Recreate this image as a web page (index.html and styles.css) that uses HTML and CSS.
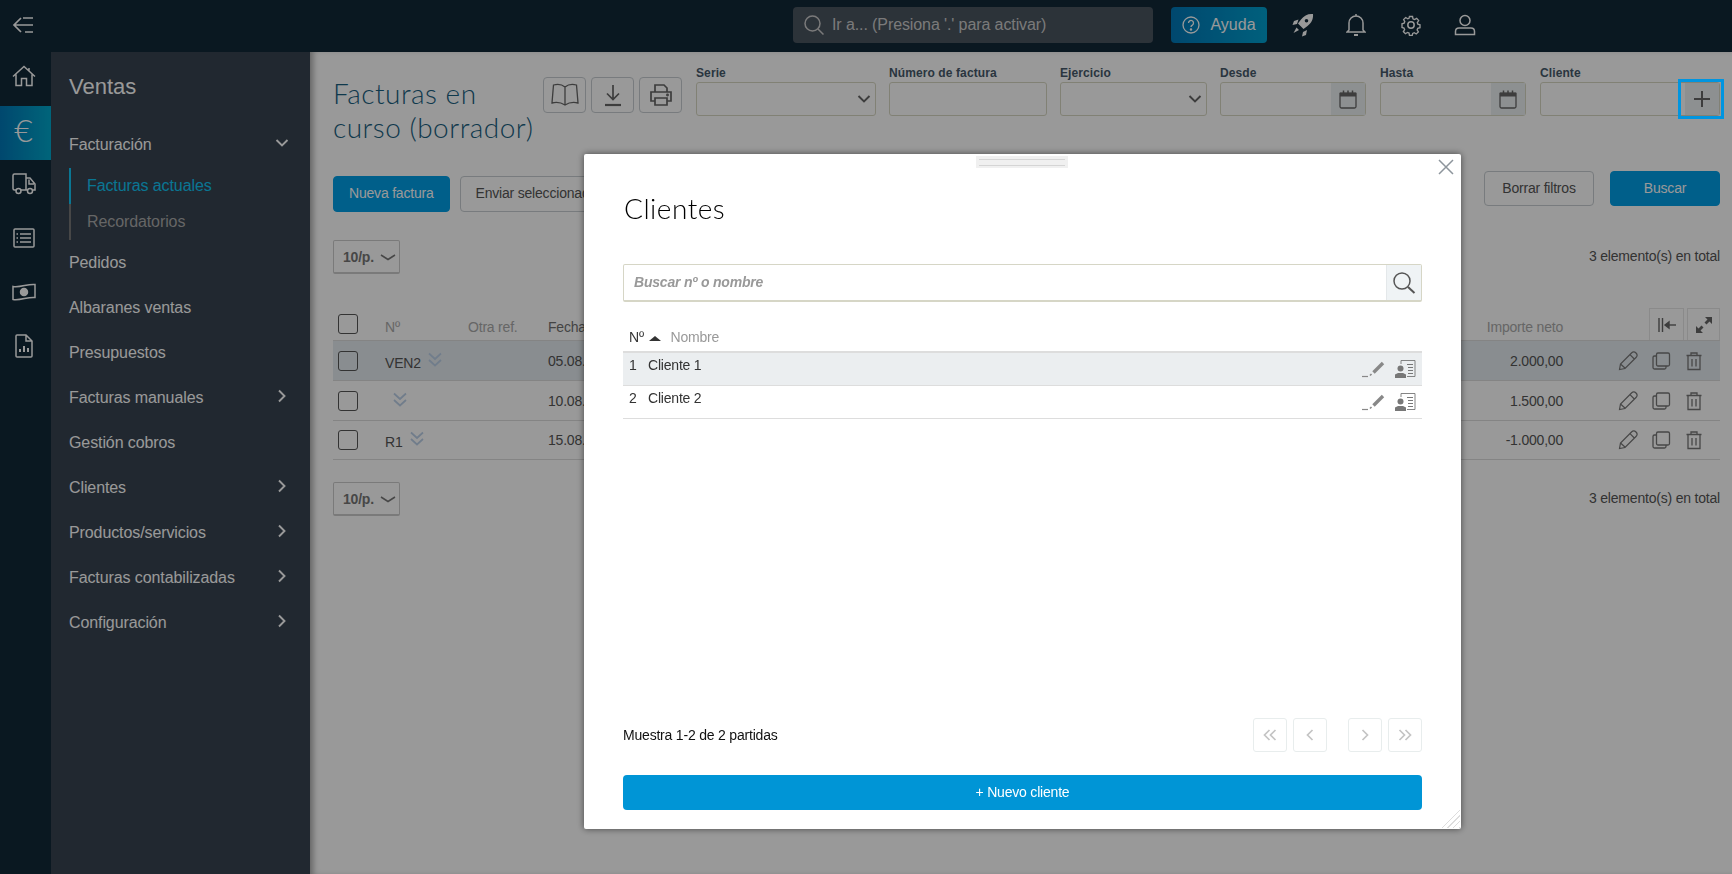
FILE: index.html
```html
<!DOCTYPE html>
<html lang="es">
<head>
    <meta charset="UTF-8">
    <meta name="viewport" content="width=device-width, initial-scale=1.0">
    <title>Facturas en curso (borrador)</title>
    <link rel="stylesheet" href="styles.css">
</head>
<body>
    <svg class="icon-defs" aria-hidden="true">
        <symbol id="i-chevron" viewBox="0 0 16 16"><path d="M2.500 5l5.500 5.500L13.500 5" fill="none" stroke="currentColor" stroke-width="1.900"/></symbol>
        <symbol id="i-chevron-r" viewBox="0 0 16 16"><path d="M5 2.500L10.500 8 5 13.500" fill="none" stroke="currentColor" stroke-width="1.900"/></symbol>
        <symbol id="i-chevron-wide" viewBox="0 0 16 16"><path d="M1 6l7 4.500L15 6" fill="none" stroke="currentColor" stroke-width="1.500"/></symbol>
        <symbol id="i-cal" viewBox="0 0 20 20"><path d="M2 4.500h16v13a1.500 1.500 0 0 1-1.500 1.500h-13A1.500 1.500 0 0 1 2 17.500z" fill="none" stroke="currentColor" stroke-width="1.300"/><path d="M2 3.500h16v4H2z" fill="currentColor"/><path d="M5.500 1.500v3M10 1.500v3M14.500 1.500v3" stroke="currentColor" stroke-width="1.500"/></symbol>
        <symbol id="i-double" viewBox="0 0 16 16"><path d="M2 1.500l6 5.500 6-5.500M2 8l6 5.500L14 8" fill="none" stroke="currentColor" stroke-width="1.700"/></symbol>
        <symbol id="i-pencil" viewBox="0 0 20 20"><path d="M1.500 18.500l1-5.500L13.500 2a2.500 2.500 0 0 1 4.500 4.500L7 17.500zM2.500 13l5 4.500M12 3.700l4.300 4.300" fill="none" stroke="currentColor" stroke-width="1.200"/></symbol>
        <symbol id="i-copy" viewBox="0 0 20 20"><rect x="5.500" y="2" width="13" height="13" rx="1.500" fill="none" stroke="currentColor" stroke-width="1.300"/><path d="M5.500 5H3.500A1.500 1.500 0 0 0 2 6.500v10A1.500 1.500 0 0 0 3.500 18h10a1.500 1.500 0 0 0 1.500-1.500V15" fill="none" stroke="currentColor" stroke-width="1.300"/></symbol>
        <symbol id="i-trash" viewBox="0 0 20 20"><path d="M2.500 4.500h15M7 4.500V2h6v2.500M4 4.500V18.500h12V4.500M8 8v7.500M12 8v7.500" fill="none" stroke="currentColor" stroke-width="1.300"/></symbol>
        <symbol id="i-sign" viewBox="0 0 24 20"><path d="M1 17.500h6" stroke="currentColor" stroke-width="1.200"/><path d="M12.500 13.500L22 4" stroke="currentColor" stroke-width="3.400"/><path d="M9 16.500l1.500-1.500" stroke="currentColor" stroke-width="1.600"/></symbol>
        <symbol id="i-contact" viewBox="0 0 22 20"><path d="M7 5V1.500h14v16h-8" fill="none" stroke="currentColor" stroke-width=".9"/><path d="M13 5.500h6M14 8.500h5M14 11.500h5M14 14.500h5" stroke="currentColor" stroke-width="1"/><circle cx="6.500" cy="9.500" r="3" fill="currentColor"/><path d="M1 19v-3.500l3-1.500h5l3 1.500V19z" fill="currentColor"/></symbol>
        <symbol id="i-pg-first" viewBox="0 0 16 16"><path d="M7.500 3l-5 5 5 5M13.500 3l-5 5 5 5" fill="none" stroke="currentColor" stroke-width="1.700"/></symbol>
        <symbol id="i-pg-prev" viewBox="0 0 16 16"><path d="M10.500 3l-5 5 5 5" fill="none" stroke="currentColor" stroke-width="1.700"/></symbol>
        <symbol id="i-pg-next" viewBox="0 0 16 16"><path d="M5.500 3l5 5-5 5" fill="none" stroke="currentColor" stroke-width="1.700"/></symbol>
        <symbol id="i-pg-last" viewBox="0 0 16 16"><path d="M2.500 3l5 5-5 5M8.500 3l5 5-5 5" fill="none" stroke="currentColor" stroke-width="1.700"/></symbol>
    </svg>

    <header class="topbar">
        <button class="collapse-btn" aria-label="Menú">
            <svg width="22" height="18" viewBox="0 0 22 18" fill="none" stroke="currentColor" stroke-width="1.700"><path d="M9 2L2 9l7 7M2 9h19M11 2h10M13 16h8"/></svg>
        </button>
        <div class="goto">
            <svg width="22" height="22" viewBox="0 0 22 22" fill="none" stroke="currentColor" stroke-width="1.500"><circle cx="9.500" cy="9.500" r="7.500"/><path d="M15 15l5.500 5.500"/></svg>
            <span>Ir a... (Presiona '.' para activar)</span>
        </div>
        <button class="help-btn">
            <svg width="18" height="18" viewBox="0 0 18 18" fill="none" stroke="currentColor" stroke-width="1.300"><circle cx="9" cy="9" r="8"/><path d="M6.500 7a2.500 2.500 0 1 1 3.800 2.100c-.9.500-1.300 1-1.300 2"/><circle cx="9" cy="13.500" r=".6" fill="currentColor"/></svg>
            Ayuda
        </button>
        <div class="top-icons">
            <svg width="22" height="24" viewBox="0 0 22 24" fill="currentColor"><path d="M21 1c-5-.5-9 1.500-12 5.500L6 10.500l5.500 5.500 4-3C19.500 10 21.500 6 21 1zM14.500 6a1.800 1.800 0 1 1 0 3.600 1.800 1.800 0 0 1 0-3.600zM6.500 6.500L2 8 .5 12l4.500-1zM15 17l-1 5-4 1.500 1-4.500zM4.500 14.500L1.500 20l5.500-3z"/></svg>
            <svg width="20" height="24" viewBox="0 0 20 24" fill="none" stroke="currentColor" stroke-width="1.500"><path d="M3 17V10a7 7 0 0 1 14 0v7l2 2H1zM10 3V1"/><path d="M8 22h4" stroke-width="2"/></svg>
            <svg class="top-gear" width="22" height="22" viewBox="0 0 22 22" fill="none" stroke="currentColor" stroke-width="1.500"><circle cx="11" cy="11" r="3.200"/><path d="M9.300 1.500h3.400l.5 2.700 1.700.8 2.400-1.400 2.200 2.500-1.500 2.200.6 1.700 2.400.8v3.200l-2.500.7-.7 1.800 1.400 2.200-2.400 2.300-2.200-1.400-1.700.7-.5 2.200H9.300l-.5-2.500-1.700-.7-2.300 1.400-2.300-2.400 1.400-2.200-.7-1.700-2.200-.6V9.600l2.400-.7.700-1.700L2.800 5l2.300-2.300 2.300 1.400 1.400-.6z" transform="translate(1.100 1.100) scale(.9)"/></svg>
            <svg width="22" height="22" viewBox="0 0 22 22" fill="none" stroke="currentColor" stroke-width="1.500"><circle cx="11" cy="6.500" r="5"/><path d="M1.500 20.500v-3c0-2 1.500-3.500 3.500-3.500h12c2 0 3.500 1.500 3.500 3.500v3z"/></svg>
        </div>
    </header>

    <div class="app">
        <nav class="rail">
            <a class="rail-item">
                <svg width="24" height="22" viewBox="0 0 24 22" fill="none" stroke="currentColor" stroke-width="1.500"><path d="M1 11.500L12 1.500l11 10M4 9.500V20.500h5.500v-7h5v7H20V9.500M17 3v3"/></svg>
            </a>
            <a class="rail-item is-active">
                <span class="euro">€</span>
            </a>
            <a class="rail-item">
                <svg width="24" height="22" viewBox="0 0 24 22" fill="none" stroke="currentColor" stroke-width="1.500"><path d="M4 17H2.500A1.500 1.500 0 0 1 1 15.500V2.500A1.500 1.500 0 0 1 2.500 1H14v16H9M14 5h4l5 6v6h-2M14 17h1M17 6.500v4.500h5"/><circle cx="6.500" cy="18" r="2.500"/><circle cx="18" cy="18" r="2.500"/></svg>
            </a>
            <a class="rail-item">
                <svg width="22" height="20" viewBox="0 0 22 20" fill="none" stroke="currentColor" stroke-width="1.500"><rect x="1" y="1" width="20" height="18" rx="1"/><path d="M7 6h11M7 10h11M7 14h11" stroke-width="1.700"/><path d="M3.500 6h1.500M3.500 10h1.500M3.500 14h1.500" stroke-width="1.700"/></svg>
            </a>
            <a class="rail-item">
                <svg width="24" height="18" viewBox="0 0 24 18" fill="none" stroke="currentColor" stroke-width="1.500"><path d="M1 3.500C8 5 16 .5 23 1.500v13C16 13.500 8 18 1 16.500z"/><circle cx="12" cy="9" r="3.500" fill="currentColor"/></svg>
            </a>
            <a class="rail-item">
                <svg width="18" height="24" viewBox="0 0 18 24" fill="none" stroke="currentColor" stroke-width="1.500"><path d="M1 2a1 1 0 0 1 1-1h9l6 6v15a1 1 0 0 1-1 1H2a1 1 0 0 1-1-1zM11 1v6h6"/><path d="M5 18v-3M9 18v-6M13 18v-4" stroke-width="2"/></svg>
            </a>
        </nav>

        <aside class="sidebar">
            <h2 class="sidebar-title">Ventas</h2>
            <ul class="menu">
                <li class="menu-item">Facturación <svg class="chev" width="16" height="16"><use href="#i-chevron"/></svg></li>
                <li class="submenu">
                    <a class="sub-item is-current">Facturas actuales</a>
                    <a class="sub-item">Recordatorios</a>
                </li>
                <li class="menu-item">Pedidos</li>
                <li class="menu-item">Albaranes ventas</li>
                <li class="menu-item">Presupuestos</li>
                <li class="menu-item">Facturas manuales <svg class="chev" width="16" height="16"><use href="#i-chevron-r"/></svg></li>
                <li class="menu-item">Gestión cobros</li>
                <li class="menu-item">Clientes <svg class="chev" width="16" height="16"><use href="#i-chevron-r"/></svg></li>
                <li class="menu-item">Productos/servicios <svg class="chev" width="16" height="16"><use href="#i-chevron-r"/></svg></li>
                <li class="menu-item">Facturas contabilizadas <svg class="chev" width="16" height="16"><use href="#i-chevron-r"/></svg></li>
                <li class="menu-item">Configuración <svg class="chev" width="16" height="16"><use href="#i-chevron-r"/></svg></li>
            </ul>
        </aside>

        <main class="content">
            <div class="head-row">
                <h1 class="page-title">Facturas en curso (borrador)</h1>
                <div class="tool-group">
                    <button class="tool-btn">
                        <svg width="28" height="24" viewBox="0 0 28 24" fill="none" stroke="currentColor" stroke-width="1.300"><path d="M14 4C11 1.500 6 1 2.500 2L1 20c4-1 9-.5 13 2 4-2.500 9-3 13-2L25.500 2C22 1 17 1.500 14 4zM14 4v18"/></svg>
                    </button>
                    <button class="tool-btn">
                        <svg width="20" height="24" viewBox="0 0 20 24" fill="none" stroke="currentColor" stroke-width="1.700"><path d="M10 2v14M4 10.500l6 6 6-6"/><path d="M2 22h16" stroke-width="2.200"/></svg>
                    </button>
                    <button class="tool-btn">
                        <svg width="24" height="24" viewBox="0 0 24 24" fill="none" stroke="currentColor" stroke-width="1.700"><path d="M6 9V2h9l3 3v4M6 18H2v-9h20v9h-4M6 15h12v7H6z"/><circle cx="18.500" cy="12" r=".6" fill="currentColor"/></svg>
                    </button>
                </div>
                <div class="filters">
                    <label class="field f-serie"><span class="field-label">Serie</span>
                        <span class="input"><svg class="select-arrow" width="16" height="16"><use href="#i-chevron"/></svg></span></label>
                    <label class="field f-num"><span class="field-label">Número de factura</span>
                        <span class="input"></span></label>
                    <label class="field f-ejer"><span class="field-label">Ejercicio</span>
                        <span class="input"><svg class="select-arrow" width="16" height="16"><use href="#i-chevron"/></svg></span></label>
                    <label class="field f-date"><span class="field-label">Desde</span>
                        <span class="input"><span class="addon"><svg width="20" height="20"><use href="#i-cal"/></svg></span></span></label>
                    <label class="field f-date f-wider"><span class="field-label">Hasta</span>
                        <span class="input"><span class="addon"><svg width="20" height="20"><use href="#i-cal"/></svg></span></span></label>
                    <label class="field f-client f-wider"><span class="field-label">Cliente</span>
                        <span class="input"><span class="addon add-focus"><svg width="18" height="18" viewBox="0 0 18 18" stroke="currentColor" stroke-width="2"><path d="M9 1v16M1 9h16"/></svg></span></span></label>
                </div>
            </div>

            <div class="action-row">
                <div class="action-left">
                    <button class="btn btn-primary">Nueva factura</button>
                    <button class="btn">Enviar seleccionados</button>
                </div>
                <div class="action-right">
                    <button class="btn btn-wide">Borrar filtros</button>
                    <button class="btn btn-primary btn-wide">Buscar</button>
                </div>
            </div>

            <div class="pager-row pager-top">
                <span class="per-page">10/p. <svg width="16" height="16"><use href="#i-chevron-wide"/></svg></span>
                <span class="total">3 elemento(s) en total</span>
            </div>

            <table class="invoices">
                <colgroup>
                    <col class="c-check"><col class="c-num"><col class="c-ref"><col class="c-date"><col><col class="c-amount"><col class="c-actions">
                </colgroup>
                <thead>
                    <tr>
                        <th class="th-check"><span class="check"></span></th>
                        <th>Nº</th>
                        <th>Otra ref.</th>
                        <th class="th-dark">Fecha</th>
                        <th></th>
                        <th class="num">Importe neto</th>
                        <th class="col-tools">
                            <div class="col-tools-inner">
                                <span class="col-btn col-btn-wide">
                                    <svg width="20" height="18" viewBox="0 0 20 18" fill="none" stroke="currentColor" stroke-width="1.400"><path d="M2 2v14M5.500 2v14"/><path d="M8 9h11"/><path d="M8 9l4-3v6z" fill="currentColor"/></svg>
                                </span>
                                <span class="col-btn">
                                    <svg width="18" height="18" viewBox="0 0 18 18" fill="currentColor"><path d="M10 1h7v7l-2.500-2.500-3 3-2-2 3-3zM8 17H1v-7l2.500 2.500 3-3 2 2-3 3z"/></svg>
                                </span>
                            </div>
                        </th>
                    </tr>
                </thead>
                <tbody>
                    <tr class="is-selected">
                        <td><span class="check"></span></td>
                        <td><span class="doc-no">VEN2</span><svg class="dbl" width="16" height="16"><use href="#i-double"/></svg></td>
                        <td></td><td>05.08.2023</td><td></td>
                        <td class="num">2.000,00</td>
                        <td><div class="row-actions"><svg width="20" height="20"><use href="#i-pencil"/></svg><svg width="20" height="20"><use href="#i-copy"/></svg><svg width="20" height="20"><use href="#i-trash"/></svg></div></td>
                    </tr>
                    <tr>
                        <td><span class="check"></span></td>
                        <td><svg class="dbl dbl-alone" width="16" height="16"><use href="#i-double"/></svg></td>
                        <td></td><td>10.08.2023</td><td></td>
                        <td class="num">1.500,00</td>
                        <td><div class="row-actions"><svg width="20" height="20"><use href="#i-pencil"/></svg><svg width="20" height="20"><use href="#i-copy"/></svg><svg width="20" height="20"><use href="#i-trash"/></svg></div></td>
                    </tr>
                    <tr>
                        <td><span class="check"></span></td>
                        <td><span class="doc-no">R1</span><svg class="dbl" width="16" height="16"><use href="#i-double"/></svg></td>
                        <td></td><td>15.08.2023</td><td></td>
                        <td class="num">-1.000,00</td>
                        <td><div class="row-actions"><svg width="20" height="20"><use href="#i-pencil"/></svg><svg width="20" height="20"><use href="#i-copy"/></svg><svg width="20" height="20"><use href="#i-trash"/></svg></div></td>
                    </tr>
                </tbody>
            </table>

            <div class="pager-row pager-bottom">
                <span class="per-page">10/p. <svg width="16" height="16"><use href="#i-chevron-wide"/></svg></span>
                <span class="total">3 elemento(s) en total</span>
            </div>
        </main>
    </div>

    <!-- modal over a dimmed page -->
    <div class="overlay"></div>
    <section class="modal">
        <div class="grip"></div>
        <svg class="modal-close" width="16" height="16" viewBox="0 0 16 16" stroke="currentColor" stroke-width="1.500"><path d="M1 1l14 14M15 1L1 15"/></svg>
        <h2 class="modal-title">Clientes</h2>
        <div class="client-search">
            <span class="client-placeholder">Buscar nº o nombre</span>
            <span class="client-search-btn">
                <svg width="24" height="24" viewBox="0 0 24 24" fill="none" stroke="currentColor" stroke-width="1.500"><circle cx="10" cy="10" r="8"/><path d="M16 16l6.500 6" stroke-width="2"/></svg>
            </span>
        </div>
        <div class="client-head">
            <span>Nº <i class="sort-up"></i></span>
            <span class="client-head-name">Nombre</span>
        </div>
        <div class="client-row is-hover">
            <span class="client-no">1</span><span class="client-name">Cliente 1</span>
            <svg class="c-sign" width="24" height="20"><use href="#i-sign"/></svg>
            <svg class="c-contact" width="22" height="20"><use href="#i-contact"/></svg>
        </div>
        <div class="client-row">
            <span class="client-no">2</span><span class="client-name">Cliente 2</span>
            <svg class="c-sign" width="24" height="20"><use href="#i-sign"/></svg>
            <svg class="c-contact" width="22" height="20"><use href="#i-contact"/></svg>
        </div>
        <div class="modal-foot">
            <span class="showing">Muestra 1-2 de 2 partidas</span>
            <div class="paging">
                <span class="page-btn"><svg width="16" height="16"><use href="#i-pg-first"/></svg></span>
                <span class="page-btn"><svg width="16" height="16"><use href="#i-pg-prev"/></svg></span>
                <span class="page-gap"></span>
                <span class="page-btn"><svg width="16" height="16"><use href="#i-pg-next"/></svg></span>
                <span class="page-btn"><svg width="16" height="16"><use href="#i-pg-last"/></svg></span>
            </div>
        </div>
        <button class="new-client">+ Nuevo cliente</button>
        <span class="resize-corner"></span>
    </section>
</body>
</html>
```

FILE: styles.css
```css
* { box-sizing: border-box; }

body {
    margin: 0;
    width: 1732px;
    height: 874px;
    overflow: hidden;
    font-family: "Liberation Sans", Arial, sans-serif;
    font-size: 14px;
    letter-spacing: -.2px;
    color: #555;
    background: #fff;
}

button {
    font-family: inherit;
    letter-spacing: inherit;
}
.icon-defs { display: none; }

/* top bar */
.topbar {
    height: 52px;
    padding-bottom: 2px;
    background: #122837;
    color: #fff;
    display: flex;
    align-items: center;
}
.collapse-btn {
    width: 51px;
    padding: 0 5px 0 0;
    background: none;
    border: 0;
    color: #fff;
    display: flex;
    justify-content: center;
}
.goto {
    margin-left: 742px;
    width: 360px;
    height: 36px;
    padding-left: 10px;
    border-radius: 4px;
    background: #4a5560;
    display: flex;
    align-items: center;
    gap: 7px;
    font-size: 16px;
    letter-spacing: -.1px;
    color: #ccc;
}
.help-btn {
    margin-left: 18px;
    width: 96px;
    height: 36px;
    border: 0;
    border-radius: 4px;
    background: linear-gradient(90deg, #0078b8, #00a0d0);
    color: #fff;
    font-size: 16px;
    letter-spacing: 0;
    display: flex;
    align-items: center;
    justify-content: center;
    gap: 10px;
}
.top-icons {
    margin-left: 25px;
    display: flex;
    align-items: center;
    gap: 32px;
}
.top-gear { margin-left: 2px; }

/* layout */
.app {
    display: flex;
    height: 822px;
}

.rail {
    width: 51px;
    background: #122837;
    color: #fff;
}
.rail-item {
    height: 54px;
    padding: 0 4px 6px 0;
    display: flex;
    align-items: center;
    justify-content: center;
}
.rail-item.is-active {
    background: linear-gradient(90deg, #0078b8, #00a8cc);
}
.euro {
    font-family: Lato, sans-serif;
    font-weight: 300;
    font-size: 32px;
    line-height: 1;
}

.sidebar {
    width: 259px;
    background: #374350;
    color: #fff;
    padding: 0 0 0 18px;
}
.sidebar-title {
    margin: 20px 0 20px;
    font-size: 22px;
    line-height: 30px;
    font-weight: normal;
    letter-spacing: 0;
}
.menu {
    margin: 0;
    padding: 0;
    list-style: none;
    font-size: 16px;
    letter-spacing: -.1px;
}
.menu-item {
    height: 45px;
    display: flex;
    align-items: center;
    justify-content: space-between;
    padding-right: 20px;
}
.menu-item:first-child { padding-top: 1px; }
.chev {
    margin-top: -4px;
    color: #fff;
}
.submenu {
    border-left: 2px solid #777;
    height: 72px;
    margin-top: 1px;
}
.sub-item {
    display: flex;
    align-items: center;
    height: 36px;
    padding-left: 16px;
    color: #aaa;
    margin-left: -2px;
    border-left: 2px solid transparent;
}
.sub-item.is-current {
    color: #11c5f5;
    border-left-color: #11c5f5;
}

.content {
    flex: 1;
    padding: 0 12px 0 23px;
    box-shadow: inset 6px 0 6px -3px rgba(0, 0, 0, .35);
}

.head-row {
    display: flex;
    height: 119px;
}
.page-title {
    margin: 24px 0 0;
    width: 210px;
    font-family: Lato, sans-serif;
    font-size: 28px;
    line-height: 34px;
    font-weight: 300;
    letter-spacing: .5px;
    color: #19607f;
}
.tool-group {
    display: flex;
    gap: 5px;
    margin-top: 25px;
    height: 36px;
}
.tool-btn {
    width: 43px;
    height: 36px;
    padding: 0;
    background: #fff;
    border: 1px solid #c8ced2;
    border-radius: 4px;
    color: #666;
    display: flex;
    align-items: center;
    justify-content: center;
}

.filters {
    display: flex;
    margin-left: 14px;
    gap: 13px;
    padding-top: 13px;
}
.field { display: block; }
.field-label {
    display: block;
    font-size: 12px;
    line-height: 17px;
    font-weight: bold;
    letter-spacing: .1px;
    color: #46596a;
}
.input {
    display: flex;
    justify-content: flex-end;
    align-items: center;
    height: 34px;
    border: 1px solid #d8d8c4;
    border-radius: 3px;
    background: #fff;
}
.f-serie { width: 180px; }
.f-num { width: 158px; }
.f-ejer { width: 147px; }
.f-date { width: 146px; }
.f-client { width: 180px; }
.f-wider { margin-left: 1px; }
.select-arrow {
    color: #666;
    margin-right: 3px;
}
.addon {
    width: 34px;
    height: 100%;
    background: #ebf0f2;
    color: #666;
    display: flex;
    align-items: center;
    justify-content: center;
}
.add-focus { position: relative; }
/* the focus ring is lifted above the dimming layer */
.add-focus::after {
    content: "";
    position: absolute;
    z-index: 5;
    left: -7px;
    right: -5px;
    top: -4px;
    bottom: -4px;
    border: 3px solid #0095e0;
}

.action-row {
    display: flex;
    justify-content: space-between;
}
.action-left {
    display: flex;
    gap: 10px;
    margin-top: 5px;
}
.action-right {
    display: flex;
    gap: 16px;
    height: 35px;
}
.btn {
    height: 36px;
    padding: 0 15px 2px;
    border: 1px solid #c8ced2;
    border-radius: 4px;
    background: #fff;
    color: #555;
    font-size: 14px;
}
.btn-primary {
    background: #009ee6;
    border-color: #009ee6;
    color: #fff;
}
.btn-wide {
    width: 110px;
    height: 35px;
    padding: 0 0 2px;
}

.pager-row {
    display: flex;
    justify-content: space-between;
    align-items: center;
}
.pager-top { margin-top: 28px; }
.pager-bottom { margin-top: 22px; }
.per-page {
    width: 67px;
    height: 34px;
    padding-left: 9px;
    border: 1px solid #ccc;
    border-bottom-width: 2px;
    border-radius: 2px;
    font-weight: bold;
    color: #777;
    display: flex;
    align-items: center;
    gap: 6px;
}
.total {
    position: relative;
    top: -1px;
    color: #555;
}

.invoices {
    width: 100%;
    margin-top: 34px;
    border-collapse: collapse;
    table-layout: fixed;
}
.c-check { width: 52px; }
.c-num { width: 83px; }
.c-ref { width: 80px; }
.c-date { width: 120px; }
.c-amount { width: 100px; }
.c-actions { width: 157px; }
.invoices th {
    height: 32px;
    padding: 6px 0 0;
    font-weight: normal;
    text-align: left;
    color: #aaa;
    border-bottom: 1px solid #ddd;
}
.invoices .th-check,
.invoices .col-tools { padding: 0; }
.invoices .th-dark { color: #727272; }
.invoices td {
    height: 40px;
    padding: 0;
    border-bottom: 1px solid #ddd;
}
.invoices tr:last-child td { height: 39px; }
.invoices .num { text-align: right; }
.is-selected td { background: #e4ebf0; }
.check {
    display: block;
    width: 20px;
    height: 20px;
    margin-left: 5px;
    border: 1px solid #555;
    border-radius: 3px;
}
.doc-no {
    position: relative;
    top: 1px;
}
.dbl {
    color: #bcd0e8;
    margin-left: 6px;
    vertical-align: -1px;
}
.dbl-alone { margin-left: 7px; }
.row-actions {
    display: flex;
    align-items: center;
    justify-content: flex-end;
    gap: 13px;
    padding-right: 16px;
    color: #777;
}
.col-tools-inner {
    display: flex;
    justify-content: flex-end;
    gap: 3px;
}
.col-btn {
    display: flex;
    align-items: center;
    justify-content: center;
    width: 33px;
    height: 32px;
    border: 1px solid #e6e6e6;
    border-bottom: 0;
    color: #666;
}
.col-btn-wide { width: 35px; }

/* modal */
.overlay {
    position: fixed;
    inset: 0;
    background: rgba(0, 0, 0, .4);
}
.modal {
    position: fixed;
    left: 584px;
    top: 154px;
    width: 877px;
    height: 675px;
    padding: 0 39px;
    background: #fff;
    border-radius: 2px;
    box-shadow: 0 0 7px rgba(0, 0, 0, .55);
    color: #333;
}
.grip {
    position: absolute;
    left: 392px;
    top: 2px;
    width: 92px;
    height: 12px;
    background: #f0f0f0;
    padding-top: 3px;
}
.grip::before {
    content: "";
    display: block;
    margin: 0 3px;
    height: 5px;
    border-top: 1px solid #d5d5d5;
    border-bottom: 1px solid #d5d5d5;
}
.modal-close {
    position: absolute;
    right: 7px;
    top: 5px;
    color: #8d959c;
}
.modal-title {
    margin: 0;
    padding: 37px 0 0 1px;
    font-family: Lato, sans-serif;
    font-size: 28px;
    line-height: 34px;
    font-weight: 300;
    color: #000;
    letter-spacing: .5px;
}
.client-search {
    margin-top: 39px;
    height: 38px;
    border: 1px solid #d6d6c6;
    border-bottom-width: 2px;
    border-radius: 2px;
    display: flex;
    justify-content: space-between;
    align-items: center;
}
.client-placeholder {
    position: relative;
    top: -1px;
    padding-left: 10px;
    font-weight: bold;
    font-style: italic;
    color: #999;
}
.client-search-btn {
    width: 35px;
    height: 100%;
    background: #eff3f5;
    border-left: 1px solid #e4e8ea;
    color: #555;
    display: flex;
    align-items: center;
    justify-content: center;
}
.client-head {
    margin-top: 24px;
    height: 27px;
    padding: 3px 0 0 6px;
    display: flex;
    border-bottom: 2px solid #ddd;
}
.client-head-name {
    margin-left: 10px;
    color: #999;
}
.sort-up {
    display: inline-block;
    margin-left: 1px;
    border-left: 6px solid transparent;
    border-right: 6px solid transparent;
    border-bottom: 5px solid #333;
    vertical-align: 1px;
}
.client-row {
    height: 33px;
    padding: 4px 6px 0 6px;
    display: flex;
    align-items: flex-start;
    border-bottom: 1px solid #ddd;
}
.client-row.is-hover {
    background: #ebeef0;
}
.client-no { width: 19px; }
.client-name { flex: 1; }
.c-sign {
    margin-top: 2px;
    color: #888;
}
.c-contact {
    margin: 2px 0 0 9px;
    color: #777;
}
.modal-foot {
    margin-top: 299px;
    display: flex;
    justify-content: space-between;
    align-items: center;
}
.showing { color: #111; }
.paging {
    display: flex;
    gap: 6px;
}
.page-btn {
    width: 34px;
    height: 34px;
    border: 1px solid #e8eded;
    border-radius: 3px;
    color: #c4c4c4;
    display: flex;
    align-items: center;
    justify-content: center;
}
.page-gap { width: 9px; }
.new-client {
    display: block;
    width: 100%;
    height: 35px;
    margin-top: 23px;
    padding-bottom: 3px;
    border: 0;
    border-radius: 4px;
    background: #0095d6;
    color: #fff;
    font-size: 14px;
}
.resize-corner {
    position: absolute;
    right: 1px;
    bottom: 1px;
    width: 20px;
    height: 20px;
    background: repeating-linear-gradient(135deg, transparent 0 3px, #ddd 3px 4px);
    clip-path: polygon(100% 0, 100% 100%, 0 100%);
}
```
